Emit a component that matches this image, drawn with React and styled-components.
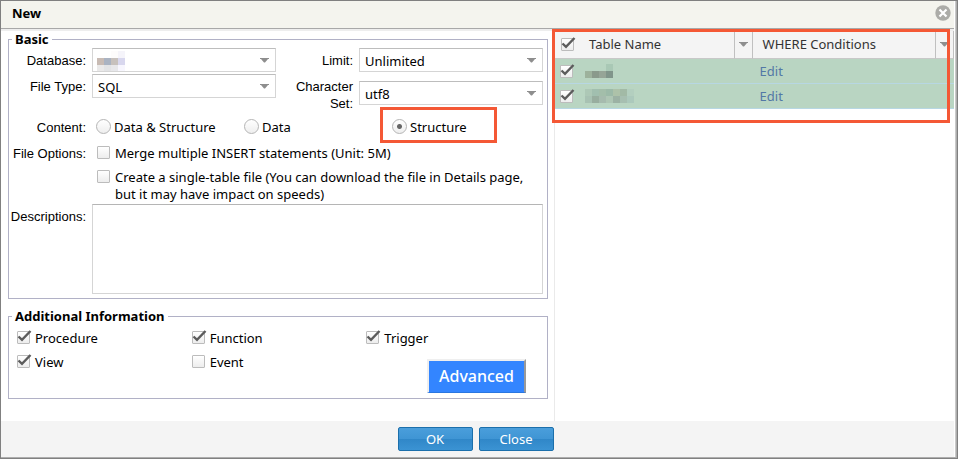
import React, { useId } from 'react';
import styled, { createGlobalStyle } from 'styled-components';

const ui = '"Noto Sans", "Open Sans", sans-serif';
const plain = '"Liberation Sans", Arial, sans-serif';

const GlobalStyle = createGlobalStyle`
  *, *::before, *::after { box-sizing: border-box; }
  body { margin: 0; background: #fff; color: #000; font: 13px/17px ${ui}; }
  button, input, select, textarea { font: inherit; color: inherit; margin: 0; }
`;

const Dialog = styled.section`
  display: flex;
  flex-direction: column;
  min-height: 100vh;
  border: 1px solid #808080;
  box-shadow: inset -1px -1px 0 #adadad, inset -2px 0 0 #c9c9c9;
  padding: 0 3px 1px 0;
`;

const TitleBar = styled.header`
  display: flex;
  align-items: center;
  justify-content: space-between;
  height: 28px;
  padding: 0 3px 3px 11px;
  background: #f4f4ee;
  border-bottom: 1px solid #a8a8a8;
`;

const Title = styled.h1`
  margin: 0;
  font-size: 13px;
  line-height: 17px;
  font-weight: 700;
`;

const CloseIcon = styled.button`
  display: flex;
  width: 16px;
  height: 16px;
  padding: 0;
  border: 0;
  background: none;
`;

const Body = styled.div`
  flex: 1;
  display: grid;
  grid-template-columns: 554fr 399fr;
  border-top: 2px solid #eee;
`;

const FormPane = styled.form`
  display: flex;
  flex-direction: column;
  gap: 9px;
  padding: 0 6px 22px 7px;
  border-right: 1px solid #eaeaea;
`;

const Group = styled.fieldset`
  min-width: 0;
  margin: 0;
  padding: 0 4px 4px 0;
  border: 1px solid #b1b1c6;
`;

const Legend = styled.legend`
  margin-left: 3px;
  padding: 0 3px;
  font-weight: 700;
  line-height: 17px;
`;

const TwoColumns = styled.div`
  display: grid;
  grid-template-columns: 1fr 1fr;
  min-height: 71px;
`;

const Fields = styled.div`
  display: flex;
  flex-direction: column;
  gap: ${(p) => p.$gap};
`;

const FieldRow = styled.div`
  display: grid;
  grid-template-columns: 77px 1fr;
  column-gap: 6px;
  align-items: start;
`;

const FieldLabel = styled.label`
  padding-top: ${(p) => (p.$tight ? '0' : '4px')};
  margin-top: ${(p) => (p.$raised ? '-3px' : '0')};
  font-family: ${plain};
  text-align: right;
`;

const SelectBox = styled.div`
  position: relative;
  display: flex;
`;

const Select = styled.select`
  appearance: none;
  width: 100%;
  height: 24px;
  padding: 2px 20px 0 5px;
  border: 1px solid #d5d5d5;
  border-top-color: #bdbdbd;
  border-radius: 0;
  background: #fff;
`;

const SelectArrow = styled.svg`
  position: absolute;
  right: 7px;
  top: 10px;
  pointer-events: none;
`;

const SelectMask = styled.svg`
  position: absolute;
  left: 5px;
  top: 3px;
  pointer-events: none;
`;

const Radios = styled.div`
  display: grid;
  grid-template-columns: repeat(3, 148px);
  padding-left: 4px;
`;

const Choice = styled.label`
  position: relative;
  display: flex;
  align-items: flex-start;
  gap: ${(p) => p.$gap || '5px'};
`;

const Radio = styled.input`
  appearance: none;
  flex: none;
  width: 15px;
  height: 15px;
  border: 1px solid #b5b5b5;
  border-radius: 50%;
  background: linear-gradient(#fff, #eee);
  &:checked {
    background: radial-gradient(circle, #666 2px, transparent 3px), linear-gradient(#fff, #eee);
  }
`;

const TickBox = styled.span`
  position: relative;
  flex: none;
  display: flex;
  margin-top: ${(p) => p.$top || '1px'};
`;

const TickInput = styled.input`
  appearance: none;
  width: 13px;
  height: 13px;
  border: 1px solid #bcbcbc;
  border-radius: 1px;
  background: linear-gradient(#fff, #ededed);
  &:not(:checked) + svg { display: none; }
`;

const TickMark = styled.svg`
  position: absolute;
  left: 0;
  top: -1px;
  pointer-events: none;
`;

const Options = styled.div`
  display: flex;
  flex-direction: column;
  gap: 7px;
  padding-left: 5px;
`;

const Details = styled.div`
  display: flex;
  flex-direction: column;
  gap: 9px;
`;

const DetailTail = styled.div`
  margin-top: -9px;
  padding-top: 1px;
`;

const Description = styled.textarea`
  display: block;
  width: 100%;
  height: 90px;
  border: 1px solid #d5d5d5;
  border-top-color: #b5b5b5;
  resize: none;
`;

const Extras = styled.div`
  display: grid;
  grid-template-columns: repeat(3, 1fr);
  grid-template-rows: 24px 40px;
  padding: 5px 2px 0 8px;
`;

const AdvancedButton = styled.button`
  grid-column: 3;
  justify-self: end;
  width: 99px;
  height: 34px;
  margin: 5px 15px 0 0;
  padding: 0;
  border: 1px solid #2a76e0;
  border-top: 2px solid #efefef;
  border-left: 2px solid #efefef;
  border-right: 2px solid #999;
  background: #3385ff;
  color: #fff;
  font-size: 16px;
  font-weight: 500;
`;

const GridPane = styled.div`
  position: relative;
  min-width: 0;
`;

const Grid = styled.table`
  width: 100%;
  table-layout: fixed;
  border-collapse: separate;
  border-spacing: 0;
  color: #333;
`;

const CheckCol = styled.col`width: 28px;`;
const NameCol = styled.col`width: 38%;`;
const MenuCol = styled.col`width: 18px;`;

const Head = styled.th`
  height: 28px;
  padding: ${(p) => p.$pad || '0'};
  border-bottom: 1px solid #c8c8c8;
  border-right: ${(p) => (p.$rule ? '1px solid #c0c0c0' : '0')};
  background: #f4f4f4;
  font-weight: 400;
  text-align: left;
`;

const Cell = styled.td`
  height: 25px;
  padding: ${(p) => p.$pad || '0'};
  border-bottom: 1px solid #b7d7e3;
  background: #b9d5c2;
`;

const MenuButton = styled.button`
  display: flex;
  align-items: center;
  justify-content: center;
  width: 100%;
  height: 26px;
  padding: 0;
  border: 0;
  background: none;
`;

const EditLink = styled.a`
  color: #5378a6;
  text-decoration: none;
`;

const Mosaic = styled.svg`
  display: block;
`;

const TableHighlight = styled.div`
  position: absolute;
  z-index: 1;
  inset: -2px 4px auto -3px;
  height: 94px;
  border: 3px solid #f45835;
  pointer-events: none;
`;

const ChoiceHighlight = styled.span`
  position: absolute;
  left: -12px;
  top: -12px;
  width: 117px;
  height: 36px;
  border: 3px solid #f45835;
  pointer-events: none;
`;

const Footer = styled.footer`
  display: flex;
  justify-content: center;
  gap: 6px;
  padding: 6px 4px 6px 0;
  background: #f4f4f4;
`;

const ActionButton = styled.button`
  width: 75px;
  height: 24px;
  padding: 0;
  border: 1px solid #1b6fab;
  border-radius: 2px;
  background: linear-gradient(#4a9edb 0, #3f95d4 50%, #3087c8 51%, #3b93d3 100%);
  color: #fff;
  font-size: 13px;
`;

function Arrow() {
  return <path d="M0 0h9v1H8L5 4.5H4L1 1H0z" fill="#8e8e8e" />;
}

function Tick({ label, top, ...rest }) {
  return (
    <TickBox $top={top}>
      <TickInput type="checkbox" aria-label={label} {...rest} />
      <TickMark width="15" height="13" viewBox="0 0 15 13">
        <path d="M1.5 6.5L5 9.8L13.5 1" fill="none" stroke="#5c5c5c" strokeWidth="2.4" />
      </TickMark>
    </TickBox>
  );
}

function TickChoice({ text, checked, gap }) {
  return (
    <Choice $gap={gap}>
      <Tick defaultChecked={checked} />
      {text}
    </Choice>
  );
}

function SelectField({ label, value, children, wrapLabel }) {
  const id = useId();
  return (
    <FieldRow>
      <FieldLabel htmlFor={id} $tight={wrapLabel} $raised={wrapLabel}>{label}</FieldLabel>
      <SelectBox>
        <Select id={id}><option>{value}</option></Select>
        {children}
        <SelectArrow width="9" height="5"><Arrow /></SelectArrow>
      </SelectBox>
    </FieldRow>
  );
}

function MosaicBlocks({ rows, cell = 7 }) {
  return rows.flatMap((row, y) =>
    row.map((fill, x) => fill && (
      <rect key={`${x}-${y}`} x={x * cell} y={y * cell} width={cell} height={cell} fill={fill} />
    ))
  );
}

const databaseBlocks = [
  [null, null, '#fdfcfc', '#f5f4fa'],
  ['#c8bbb4', '#aab3c2', '#c7c1bd', '#d8d7ee'],
  ['#eae9e9', '#e2e3e5', '#e7e7ea', '#f7f6fe'],
];

const tables = [
  [
    [null, null, null, '#a9c8b5'],
    ['#9db29c', '#8a9a8b', '#96a597', '#80958a'],
  ],
  [
    ['#adc8b6', '#a1bfaf', '#a3beaa', '#9cbaa8', '#adc2a9', '#a2baa6', '#b3cfbf'],
    ['#a8c2b3', '#98ae9f', '#a6bbae', '#aec6b4', '#9cb2a4', '#a7bfb1', '#acc9bc'],
  ],
];

export default function App() {
  return (
    <>
      <GlobalStyle />
      <Dialog role="dialog" aria-labelledby="dialog-title">
        <TitleBar>
          <Title id="dialog-title">New</Title>
          <CloseIcon aria-label="Close dialog">
            <svg width="16" height="16" viewBox="0 0 16 16">
              <circle cx="8" cy="8" r="7.7" fill="#acaca8" />
              <path d="M4.5 4.5l7 7M11.5 4.5l-7 7" stroke="#fff" strokeWidth="2.2" />
            </svg>
          </CloseIcon>
        </TitleBar>

        <Body>
          <FormPane id="export-form">
            <Group>
              <Legend>Basic</Legend>
              <TwoColumns>
                <Fields $gap="2px">
                  <SelectField label="Database:" value="">
                    <SelectMask width="28" height="20"><MosaicBlocks rows={databaseBlocks} /></SelectMask>
                  </SelectField>
                  <SelectField label="File Type:" value="SQL" />
                </Fields>
                <Fields $gap="9px">
                  <SelectField label="Limit:" value="Unlimited" />
                  <SelectField label="Character Set:" value="utf8" wrapLabel />
                </Fields>
              </TwoColumns>

              <Details>
                <FieldRow role="radiogroup" aria-labelledby="content-label">
                  <FieldLabel as="span" id="content-label" $tight>Content:</FieldLabel>
                  <Radios>
                    <Choice $gap="3px"><Radio type="radio" name="content" />Data &amp; Structure</Choice>
                    <Choice $gap="3px"><Radio type="radio" name="content" />Data</Choice>
                    <Choice $gap="3px">
                      <Radio type="radio" name="content" defaultChecked />Structure
                      <ChoiceHighlight />
                    </Choice>
                  </Radios>
                </FieldRow>
                <FieldRow role="group" aria-labelledby="options-label">
                  <FieldLabel as="span" id="options-label" $tight>File Options:</FieldLabel>
                  <Options>
                    <TickChoice text="Merge multiple INSERT statements (Unit: 5M)" />
                    <TickChoice text="Create a single-table file (You can download the file in Details page, but it may have impact on speeds)" />
                  </Options>
                </FieldRow>
                <DetailTail>
                  <FieldRow>
                    <FieldLabel htmlFor="description">Descriptions:</FieldLabel>
                    <Description id="description" />
                  </FieldRow>
                </DetailTail>
              </Details>
            </Group>

            <Group>
              <Legend>Additional Information</Legend>
              <Extras>
                <TickChoice text="Procedure" checked />
                <TickChoice text="Function" checked />
                <TickChoice text="Trigger" checked />
                <TickChoice text="View" checked />
                <TickChoice text="Event" />
                <AdvancedButton type="button">Advanced</AdvancedButton>
              </Extras>
            </Group>
          </FormPane>

          <GridPane>
            <Grid>
              <colgroup>
                <CheckCol /><NameCol /><MenuCol /><col /><MenuCol />
              </colgroup>
              <thead>
                <tr>
                  <Head $pad="0 0 0 6px"><Tick top="0" label="Select all tables" defaultChecked /></Head>
                  <Head $pad="0 0 0 6px" $rule>Table Name</Head>
                  <Head $rule>
                    <MenuButton aria-label="Table Name menu"><svg width="9" height="5"><Arrow /></svg></MenuButton>
                  </Head>
                  <Head $pad="0 0 0 10px" $rule>WHERE Conditions</Head>
                  <Head $rule>
                    <MenuButton aria-label="WHERE Conditions menu"><svg width="9" height="5"><Arrow /></svg></MenuButton>
                  </Head>
                </tr>
              </thead>
              <tbody>
                {tables.map((rows, i) => (
                  <tr key={i}>
                    <Cell $pad="0 0 0 5px"><Tick top="0" label={`Select table ${i + 1}`} defaultChecked /></Cell>
                    <Cell $pad="0 0 0 2px">
                      <Mosaic width="49" height={rows.length * 7}><MosaicBlocks rows={rows} /></Mosaic>
                    </Cell>
                    <Cell />
                    <Cell $pad="0 0 0 7px"><EditLink href="#edit">Edit</EditLink></Cell>
                    <Cell />
                  </tr>
                ))}
              </tbody>
            </Grid>
            <TableHighlight />
          </GridPane>
        </Body>

        <Footer>
          <ActionButton type="submit" form="export-form">OK</ActionButton>
          <ActionButton type="button">Close</ActionButton>
        </Footer>
      </Dialog>
    </>
  );
}
